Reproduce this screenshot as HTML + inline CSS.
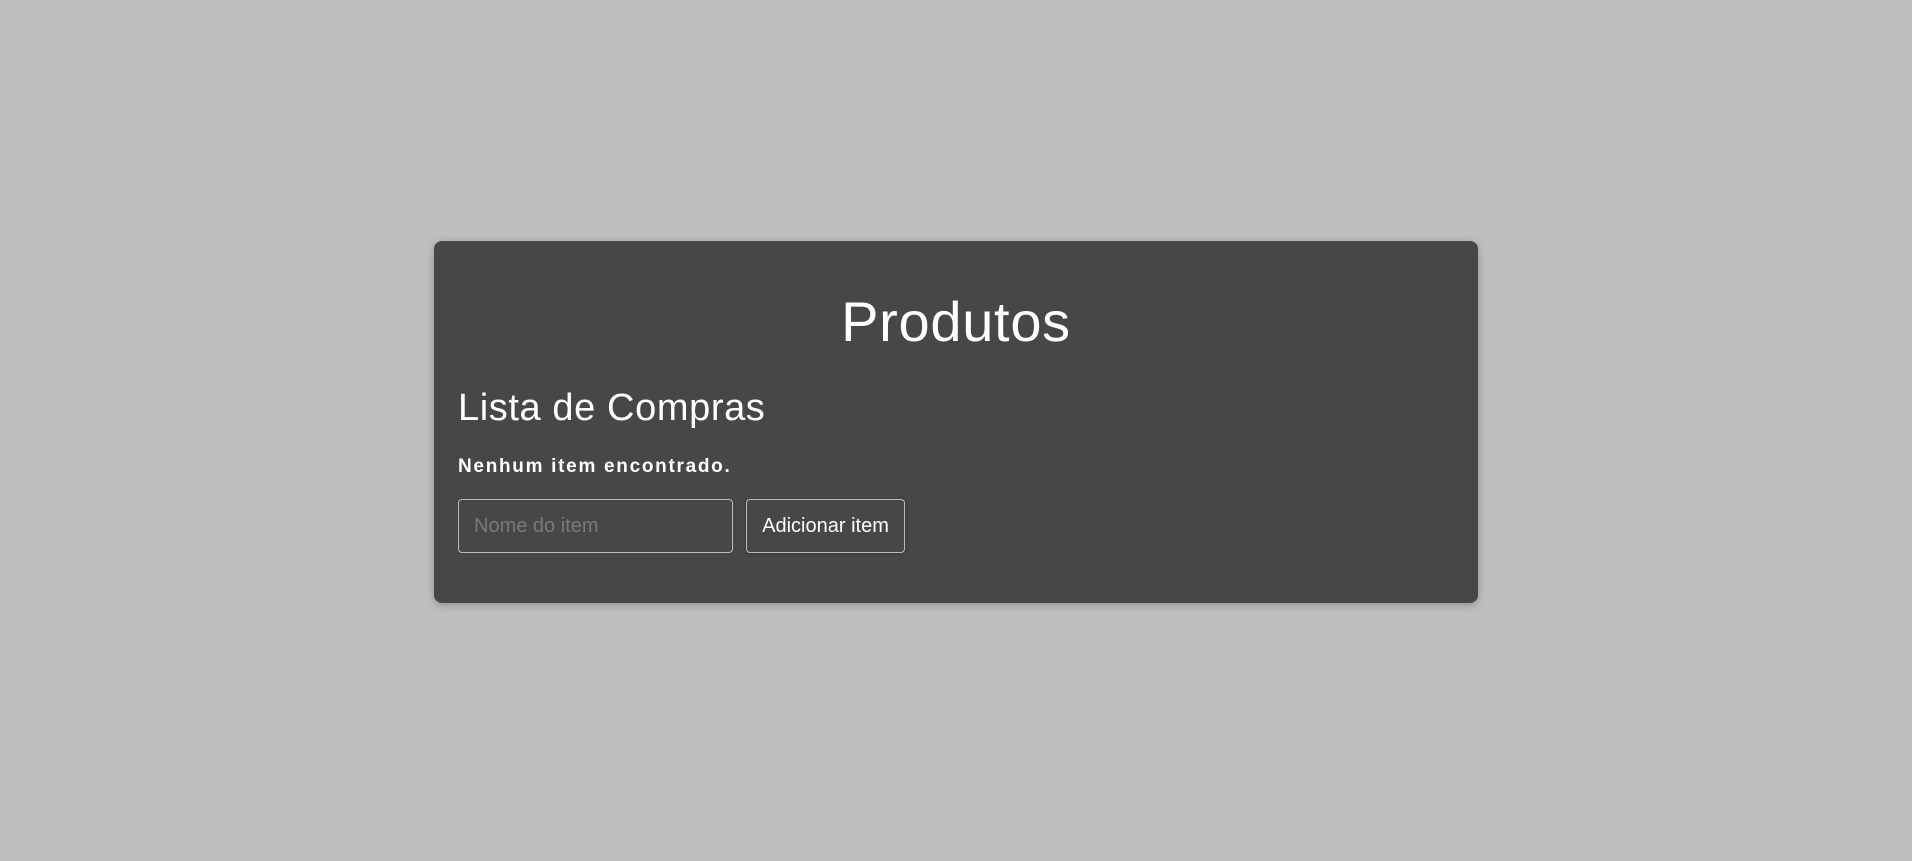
<!DOCTYPE html>
<html><head><meta charset="utf-8"><style>
html,body{margin:0;padding:0;width:1912px;height:861px;background:#bebebe;overflow:hidden;font-family:"Liberation Sans",sans-serif}
.card{position:absolute;left:434px;top:241px;width:1044px;height:362px;background:#474747;border-radius:8px;box-shadow:0 2px 8px rgba(0,0,0,.25);color:#fff}
.t{position:absolute;margin:0;font-weight:400;line-height:0}
.inp{position:absolute;left:24px;top:258px;height:52px;border:1px solid #bbb;border-radius:4px;box-sizing:content-box;color:#7a7a7a;font-size:20px;line-height:52px;padding-left:15px;width:258px}
.btn{position:absolute;left:312px;top:258px;width:157px;height:52px;border:1px solid #bbb;border-radius:4px;font-size:20px;line-height:52px;text-align:center;box-shadow:0 1px 4px rgba(0,0,0,.25)}
</style></head><body>
<div class="card">
<div class="t" style="left:0;right:0;top:81px;text-align:center;font-size:56px;letter-spacing:0.7px">Produtos</div>
<div class="t" style="left:24px;top:167px;font-size:38px;font-weight:300;letter-spacing:0.6px">Lista de Compras</div>
<div class="t" style="left:24px;top:226px;font-size:19px;font-weight:700;letter-spacing:1.7px">Nenhum item encontrado.</div>
<div class="inp">Nome do item</div>
<div class="btn">Adicionar item</div>
</div>
</body></html>
